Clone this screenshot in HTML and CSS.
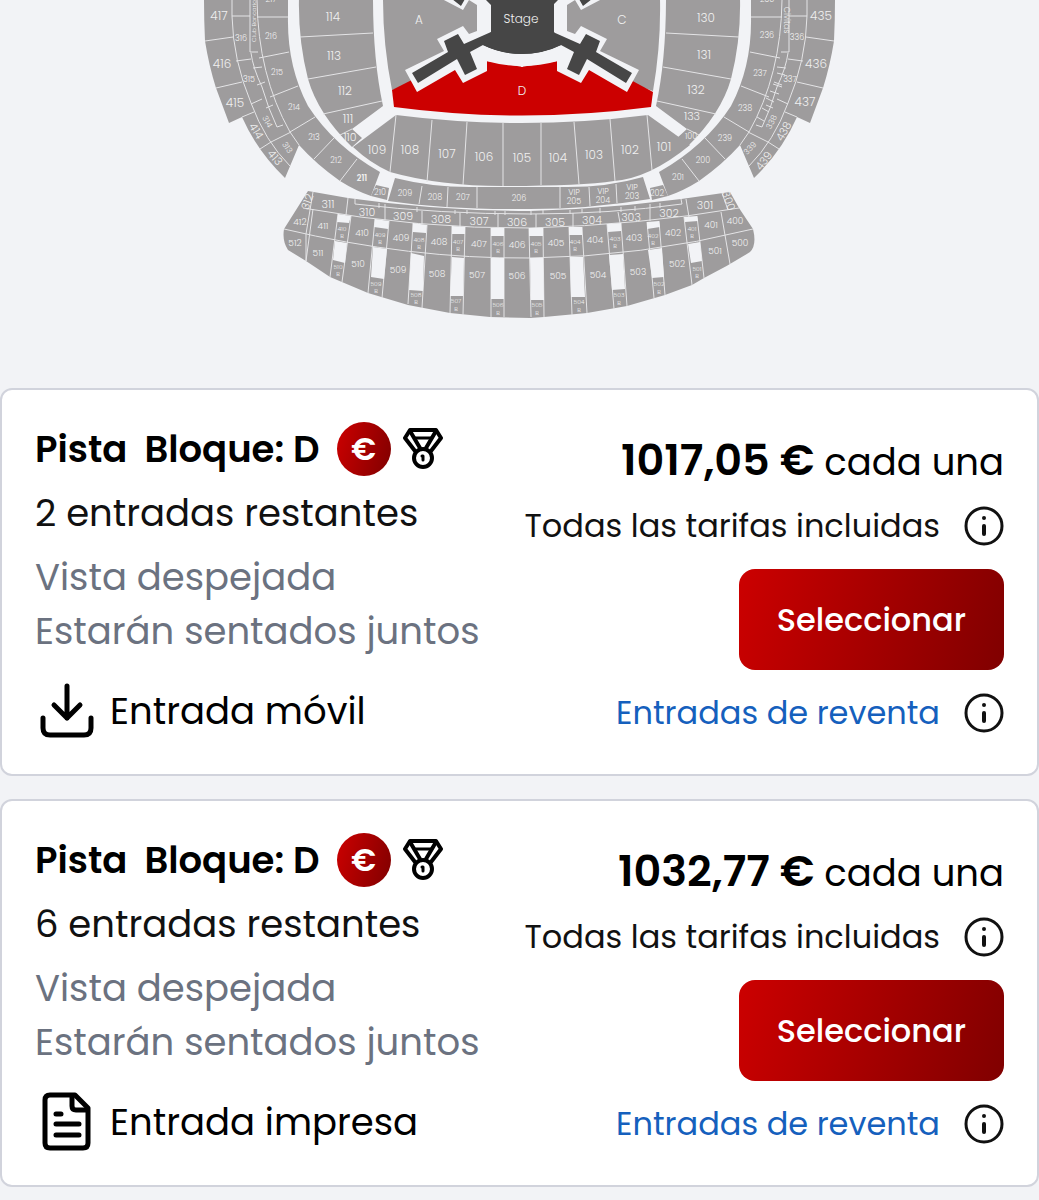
FILE: index.html
```
<!DOCTYPE html>
<html lang="es">

<head>
    <meta charset="UTF-8">
    <meta name="viewport" content="width=device-width, initial-scale=1.0">
    <title>Entradas</title>
    <link rel="stylesheet" href="styles.css">
</head>

<body>
    <!-- shared icons -->
    <svg class="sprite" aria-hidden="true">
        <symbol id="icon-medal" viewBox="0 0 40 42">
            <g fill="none" stroke="#000" stroke-width="4" stroke-linejoin="round" stroke-linecap="round">
                <path d="M12 23 L2 10 L7 2 H33 L38 10 L28 23" />
                <path d="M7 3 L17 20 M33 3 L23 20" />
                <path d="M12 10 H28" stroke-width="3" />
                <circle cx="20" cy="30" r="9" />
                <path d="M19 28 L20 28 V32" stroke-width="3" />
            </g>
        </symbol>
        <symbol id="icon-info" viewBox="0 0 40 40">
            <circle cx="20" cy="20" r="18" fill="none" stroke="#111" stroke-width="3" />
            <circle cx="20" cy="12" r="2" fill="#111" />
            <path d="M20 20 V28" stroke="#111" stroke-width="4" stroke-linecap="round" />
        </symbol>
        <symbol id="icon-download" viewBox="0 0 60 60">
            <path d="M32 5 V37 M19 24 L32 37 L45 24 M8 37 V47 Q8 54 15 54 H49 Q56 54 56 47 V37" fill="none" stroke="#000" stroke-width="5" stroke-linecap="round" stroke-linejoin="round" />
        </symbol>
        <symbol id="icon-paper" viewBox="0 0 60 60">
            <g fill="none" stroke="#000" stroke-width="5" stroke-linecap="round" stroke-linejoin="round">
                <path d="M40 3 H15 Q10 3 10 8 V51 Q10 56 15 56 H48 Q53 56 53 51 V16 Z" />
                <path d="M37 4 V14 Q37 18 41 18 H52" />
                <path d="M21 22 H26 M21 32 H44 M21 43 H44" />
            </g>
        </symbol>
    </svg>

    <svg class="map" viewBox="0 0 1039 388" role="img" aria-label="Plano del estadio">
        <defs>
            <g id="wing">
                <path class="seat" d="M204 -2 V0 Q204 20 205 41 Q209 66 216 88 L229 123 L242 117 Q257 151 285 178 L299 145 Q316 164 340 181 Q356 191 371 196 L380 172 Q334 146 308 106 Q287 66 288 17 V-2 Z" />
                <path class="seat" d="M299 -2 Q298 40 308 79 Q318 114 352 147 L362 138 L352 129 L383 106 Q373 60 373 -2 Z" />
                <path class="seat" d="M376 185 L389 188 L387 200 L371 196 Z" />
                <path class="line" d="M232 0 V16 Q233 60 251 103 Q265 141 290 166 M205 41 L233 37 M216 88 L242 82 M242 117 L254 112 M260 149 L271 142 L291 132 M232 16 H250 M257 17 H288 M236 61 L251 59 M251 104 L262 99" />
                <path class="line" d="M257 0 Q258 75 290 132 L299 145 M259 58 L289 52 M270 97 L298 86 M290 132 L315 117 M314 159 L334 138 M340 181 L357 159" />
                <path class="line" d="M300 37 L373 33 M308 79 L376 67 M323 114 L382 101 M340 135 L352 129" />
                <path class="line" d="M250 0 V52 H258 M251 53 Q253 68 262 87 Q268 108 277 127 L283 125 M253 68 L262 67 M257 85 L265 82 M266 108 L273 105" />
            </g>
            <g id="arm">
                <path class="gap" d="M442 -1 L463 10 L469 0 L477 5 V31 L469 34 L463 26 L437 39 L444 51 L405 70 L417 92 L455 70 L463 83 L487 71 V61 L523 67 V-1 Z" />
                <path class="stage" d="M452 -1 L461 6 L465 -1 Z M485 -1 L491 5 V32 L464 44 L458 34 L444 41 L448 52 L412 73 L418 83 L457 59 L465 75 L477 69 L470 52 L483 45 Q500 54 523 54 V-1 Z" />
            </g>
        </defs>

        <use href="#wing" />
        <use href="#wing" transform="translate(1039 0) scale(-1 1)" />
        <path class="line" d="M785 75 L777 73 M782 87 L773 84 M779 94 L770 91 M774 102 L766 98 M769 112 L762 108 M764 121 L757 117" />

        <!-- floor -->
        <path class="seat" d="M383 -1 Q383 45 392 90 L480 61 V-1 Z M660 -1 Q661 45 653 91 L565 61 V-1 Z" />
        <path class="selected" d="M392 90 L455 58 H590 L653 92 L651 107 Q521 124 394 107 Z" />
        <use href="#arm" />
        <use href="#arm" transform="translate(1044 0) scale(-1 1)" />
        <path class="gap" d="M486 47 Q521 62 559 47 L558 61 Q522 71 486 61 Z" />
        <path class="stage" d="M483 45 Q521 63 561 45 L554 32 V-1 H491 V32 Z" />

        <!-- lower stand -->
        <path class="seat" d="M353 147 L396 115 Q521 131 648 115 L690 145 Q650 178 614 181 Q580 186 503 186 Q440 186 390 172 Q370 163 353 147 Z" />
        <path class="line" d="M396 115 L390 172 M432 120 L427 182 M467 122 L463 185 M503 123 V186 M541 123 V185 M574 122 L579 184 M610 119 L615 181 M647 115 L652 170" />

        <path class="seat" d="M395 178 Q435 188 477 187 H560 Q605 188 643 177 L650 199 Q590 209 530 209 Q450 210 388 201 Z" />
        <path class="line" d="M422 186 L419 204 M448 187 L447 207 M477 187 V208 M560 187 V208 M589 187 L590 206 M616 184 L617 203" />

        <!-- outer stand -->
        <path class="seat" d="M308 191 L348 198 Q440 211 530 211 Q630 208 730 192 L739 208 L753 229 Q757 245 750 252 Q728 266 704 278 L692 285 L665 295 L627 306 L587 313 L544 317 L530 318 L490 317 L450 313 L408 305 L368 293 L330 277 L306 261 L288 250 Q282 241 284 229 Z" />
        <path class="line" d="M303 208 Q420 229 530 228 Q640 225 739 208 M284 229 Q410 259 530 258 Q640 257 753 229 M355 199 V204 Q440 214 530 214 Q610 214 682 204 L681 199" />
        <path class="line" d="M313 192 L306 234 L306 261 M348 198 L346 215 M385 204 V220 M422 211 V224 M460 213 V227 M498 214 V228 M536 214 V228 M573 213 V227 M618 212 L620 223 M650 204 V221 M686 199 L689 217 M722 193 L728 210 M313 209 L306 261 M721 212 L730 264 M379 203 V208 M417 207 V212 M455 210 V214 M467 210 V214 M495 211 V215 M505 211 V215 M531 211 V215 M543 210 V214 M570 210 V214 M582 209 V213 M600 208 V213 M621 207 V212 M635 206 V211 M660 203 V208" />
        <path class="line" d="M338 214 L330 277 M351 216 L342 282 M375 219 L368 293 M389 221 L382 298 M413 223 L408 304 M427 225 L422 308 M452 226 L450 313 M465 227 L463 315 M491 228 V317 M504 228 V317 M529 228 L531 317 M543 228 L544 317 M569 227 L572 315 M582 227 L587 313 M607 224 L614 309 M621 223 L627 306 M647 222 L654 298 M659 221 L665 295 M684 217 L692 285 M697 216 L704 278" />
        <path class="gap" d="M338 214 L351 216 L349 223 L337 222 Z M375 219 L389 221 L388 229 L374 227 Z M413 223 L427 225 L426 233 L413 232 Z M452 226 L465 227 V234 H452 Z M491 228 H504 V236 H491 Z M529 228 H543 V236 H529 Z M569 227 H582 V235 H569 Z M607 224 L621 223 V231 L608 232 Z M647 222 L659 221 L660 227 L647 229 Z M684 217 L697 216 L698 221 L685 222 Z" />
        <path class="gap" d="M335 241 L347 243 L345 263 L333 260 Z M373 247 L387 249 L384 279 L371 277 Z M411 253 L424 256 L423 291 L409 290 Z M452 257 L464 258 L463 296 H450 Z M491 258 H504 V299 H491 Z M530 258 H543 L544 300 H531 Z M570 257 H583 L585 297 H571 Z M609 255 L623 254 L625 289 L612 290 Z M648 250 L662 248 L664 277 L652 278 Z M688 244 L700 242 L702 261 L691 263 Z" />

        <g class="label-lg">
            <text x="521" y="23">Stage</text>
            <text x="419" y="24">A</text>
            <text x="622" y="24">C</text>
            <text x="522" y="95">D</text>
            <text x="333" y="21">114</text>
            <text x="334" y="60">113</text>
            <text x="345" y="95">112</text>
            <text x="348" y="123">111</text>
            <text x="706" y="22">130</text>
            <text x="704" y="59">131</text>
            <text x="696" y="94">132</text>
            <text x="377" y="154">109</text>
            <text x="410" y="154">108</text>
            <text x="447" y="158">107</text>
            <text x="484" y="161">106</text>
            <text x="522" y="162">105</text>
            <text x="558" y="162">104</text>
            <text x="594" y="159">103</text>
            <text x="630" y="154">102</text>
            <text x="664" y="151">101</text>
            <text x="219" y="20">417</text>
            <text x="222" y="68">416</text>
            <text x="235" y="107">415</text>
            <text x="821" y="20">435</text>
            <text x="816" y="68">436</text>
            <text x="805" y="106">437</text>
        </g>
        <g class="label-md">
            <text x="692" y="120">133</text>
            <text x="350" y="141">110</text>
            <text transform="translate(253 133) rotate(58)">414</text>
            <text transform="translate(272 160) rotate(50)">413</text>
            <text transform="translate(787 133) rotate(-62)">438</text>
            <text transform="translate(767 163) rotate(-54)">439</text>
            <text transform="translate(311 203) rotate(-70)">312</text>
            <text transform="translate(725 202) rotate(70)">300</text>
            <text x="328" y="208">311</text>
            <text x="367" y="216">310</text>
            <text x="403" y="220">309</text>
            <text x="441" y="223">308</text>
            <text x="479" y="225">307</text>
            <text x="517" y="226">306</text>
            <text x="555" y="226">305</text>
            <text x="592" y="224">304</text>
            <text x="631" y="221">303</text>
            <text x="669" y="217">302</text>
            <text x="705" y="209">301</text>
        </g>
        <g class="label-sm">
            <text x="300" y="225">412</text>
            <text x="323" y="229">411</text>
            <text x="362" y="236">410</text>
            <text x="401" y="241">409</text>
            <text x="439" y="245">408</text>
            <text x="479" y="247">407</text>
            <text x="517" y="248">406</text>
            <text x="556" y="246">405</text>
            <text x="595" y="243">404</text>
            <text x="634" y="241">403</text>
            <text x="673" y="236">402</text>
            <text x="711" y="228">401</text>
            <text x="735" y="224">400</text>
            <text x="295" y="246">512</text>
            <text x="318" y="256">511</text>
            <text x="358" y="267">510</text>
            <text x="398" y="273">509</text>
            <text x="437" y="277">508</text>
            <text x="477" y="278">507</text>
            <text x="517" y="279">506</text>
            <text x="558" y="279">505</text>
            <text x="598" y="278">504</text>
            <text x="638" y="275">503</text>
            <text x="677" y="267">502</text>
            <text x="715" y="254">501</text>
            <text x="740" y="246">500</text>
        </g>
        <g class="label-xs">
            <text x="271" y="39">216</text>
            <text x="277" y="75">215</text>
            <text x="294" y="110">214</text>
            <text x="314" y="140">213</text>
            <text x="336" y="163">212</text>
            <text class="strong" x="362" y="181">211</text>
            <text x="380" y="195">210</text>
            <text x="405" y="196">209</text>
            <text x="435" y="200">208</text>
            <text x="463" y="200">207</text>
            <text x="519" y="201">206</text>
            <text x="574" y="195">VIP</text>
            <text x="574" y="204">205</text>
            <text x="603" y="194">VIP</text>
            <text x="603" y="203">204</text>
            <text x="632" y="190">VIP</text>
            <text x="632" y="199">203</text>
            <text x="657" y="196">202</text>
            <text x="678" y="180">201</text>
            <text x="703" y="163">200</text>
            <text x="725" y="141">239</text>
            <text x="745" y="111">238</text>
            <text x="760" y="76">237</text>
            <text x="767" y="38">236</text>
            <text x="767" y="2">235</text>
            <text x="271" y="2">217</text>
            <text x="691" y="139">100</text>
            <text x="241" y="41">316</text>
            <text x="249" y="82">315</text>
            <text transform="translate(265 123) rotate(60)">314</text>
            <text transform="translate(285 149) rotate(56)">313</text>
            <text x="797" y="40">336</text>
            <text x="790" y="82">337</text>
            <text transform="translate(774 123) rotate(-64)">338</text>
            <text transform="translate(752 150) rotate(-46)">339</text>
            <text transform="translate(784 20) rotate(90)">Civitas</text>
        </g>
        <g class="label-xxs">
            <text transform="translate(256 21) rotate(-90)">Club Bancario</text>
            <text x="342" y="231">410</text><text x="342" y="238">B</text>
            <text x="380" y="237">409</text><text x="380" y="244">B</text>
            <text x="419" y="242">408</text><text x="419" y="249">B</text>
            <text x="458" y="244">407</text><text x="458" y="251">B</text>
            <text x="498" y="246">406</text><text x="498" y="253">B</text>
            <text x="536" y="246">405</text><text x="536" y="253">B</text>
            <text x="575" y="244">404</text><text x="575" y="251">B</text>
            <text x="615" y="241">403</text><text x="615" y="248">B</text>
            <text x="653" y="238">402</text><text x="653" y="245">B</text>
            <text x="692" y="231">401</text><text x="692" y="238">B</text>
            <text x="338" y="269">510</text><text x="338" y="276">B</text>
            <text x="376" y="286">509</text><text x="376" y="293">B</text>
            <text x="416" y="297">508</text><text x="416" y="304">B</text>
            <text x="456" y="303">507</text><text x="456" y="311">B</text>
            <text x="498" y="307">506</text><text x="498" y="315">B</text>
            <text x="537" y="307">505</text><text x="537" y="315">B</text>
            <text x="579" y="304">504</text><text x="579" y="312">B</text>
            <text x="619" y="297">503</text><text x="619" y="305">B</text>
            <text x="659" y="286">502</text><text x="659" y="294">B</text>
            <text x="697" y="271">501</text><text x="697" y="278">B</text>
        </g>
    </svg>

    <main class="tickets">
        <article class="ticket">
            <div class="details">
                <h2 class="title">
                    <span>Pista</span>
                    <span>Bloque: D</span>
                    <span class="badge">€</span>
                    <svg class="medal" aria-hidden="true"><use href="#icon-medal" /></svg>
                </h2>
                <p class="remaining">2 entradas restantes</p>
                <p class="note">Vista despejada</p>
                <p class="note">Estarán sentados juntos</p>
                <p class="delivery">
                    <svg class="delivery-icon" aria-hidden="true"><use href="#icon-download" /></svg>
                    Entrada móvil
                </p>
            </div>
            <div class="purchase">
                <p class="price"><strong>1017,05 €</strong> cada una</p>
                <p class="extra">
                    Todas las tarifas incluidas
                    <button class="info" aria-label="Información sobre tarifas"><svg><use href="#icon-info" /></svg></button>
                </p>
                <button class="select">Seleccionar</button>
                <p class="extra">
                    <a href="#">Entradas de reventa</a>
                    <button class="info" aria-label="Información sobre reventa"><svg><use href="#icon-info" /></svg></button>
                </p>
            </div>
        </article>

        <article class="ticket">
            <div class="details">
                <h2 class="title">
                    <span>Pista</span>
                    <span>Bloque: D</span>
                    <span class="badge">€</span>
                    <svg class="medal" aria-hidden="true"><use href="#icon-medal" /></svg>
                </h2>
                <p class="remaining">6 entradas restantes</p>
                <p class="note">Vista despejada</p>
                <p class="note">Estarán sentados juntos</p>
                <p class="delivery">
                    <svg class="delivery-icon" aria-hidden="true"><use href="#icon-paper" /></svg>
                    Entrada impresa
                </p>
            </div>
            <div class="purchase">
                <p class="price"><strong>1032,77 €</strong> cada una</p>
                <p class="extra">
                    Todas las tarifas incluidas
                    <button class="info" aria-label="Información sobre tarifas"><svg><use href="#icon-info" /></svg></button>
                </p>
                <button class="select">Seleccionar</button>
                <p class="extra">
                    <a href="#">Entradas de reventa</a>
                    <button class="info" aria-label="Información sobre reventa"><svg><use href="#icon-info" /></svg></button>
                </p>
            </div>
        </article>
    </main>
</body>

</html>
```
FILE: styles.css
```
* {
    box-sizing: border-box;
}

body {
    margin: 0;
    background-color: #f2f3f6;
    color: #000;
    font-family: Poppins, Inter, sans-serif;
    font-size: 37px;
    line-height: 54px;
}

h2,
p {
    margin: 0;
}

button {
    font-family: inherit;
    border: none;
    cursor: pointer;
}

.sprite {
    position: absolute;
    width: 0;
    height: 0;
}

/* stadium map */
.map {
    display: block;
    width: 100%;
}

.map text {
    fill: #f0f0f0;
    font-weight: 300;
    line-height: 1;
    text-anchor: middle;
}

.seat {
    fill: #9e9c9d;
}

.selected {
    fill: #cc0000;
}

.stage {
    fill: #464646;
}

.gap {
    fill: #f2f3f6;
}

.line {
    fill: none;
    stroke: #e4e4e6;
    stroke-width: 1;
}

.label-lg {
    font-size: 12px;
}

.label-md {
    font-size: 11px;
}

.label-sm {
    font-size: 9px;
}

.label-xs {
    font-size: 8px;
}

.label-xxs {
    font-size: 6px;
}

.map .strong {
    font-weight: 600;
}

/* ticket list */
.tickets {
    display: flex;
    flex-direction: column;
    gap: 23px;
    padding-bottom: 13px;
}

.ticket {
    display: flex;
    justify-content: space-between;
    padding: 32px 33px 33px;
    background-color: #fff;
    border: 2px solid #d1d3dc;
    border-radius: 12px;
}

.title {
    display: flex;
    align-items: center;
    gap: 17px;
    font-size: 37px;
    font-weight: 600;
}

.badge {
    display: flex;
    align-items: center;
    justify-content: center;
    width: 54px;
    height: 54px;
    border-radius: 50%;
    background: linear-gradient(105deg, #cc0000, #800000);
    color: #fff;
    font-size: 31px;
}

.medal {
    width: 40px;
    height: 42px;
    margin-left: -5px;
}

.remaining {
    margin: 10px 0;
    color: #111;
}

.note {
    color: #6b7280;
}

.delivery {
    display: flex;
    align-items: center;
    gap: 15px;
    margin-top: 23px;
}

.delivery-icon {
    width: 60px;
    height: 60px;
}

.purchase {
    display: flex;
    flex-direction: column;
    align-items: flex-end;
    padding-top: 11px;
}

.price {
    margin-bottom: 10px;
}

.price strong {
    font-size: 43px;
    font-weight: 600;
}

.extra {
    display: flex;
    align-items: center;
    gap: 24px;
    color: #111;
    font-size: 32px;
}

.extra a {
    color: #1560bd;
    text-decoration: none;
}

.info {
    padding: 0;
    background: none;
}

.info svg {
    display: block;
    width: 40px;
    height: 40px;
}

.select {
    margin: 16px 0;
    padding: 24px 38px;
    border-radius: 16px;
    background: linear-gradient(105deg, #cc0000, #800000);
    color: #fff;
    font-size: 32px;
    font-weight: 500;
    line-height: 53px;
}
```
